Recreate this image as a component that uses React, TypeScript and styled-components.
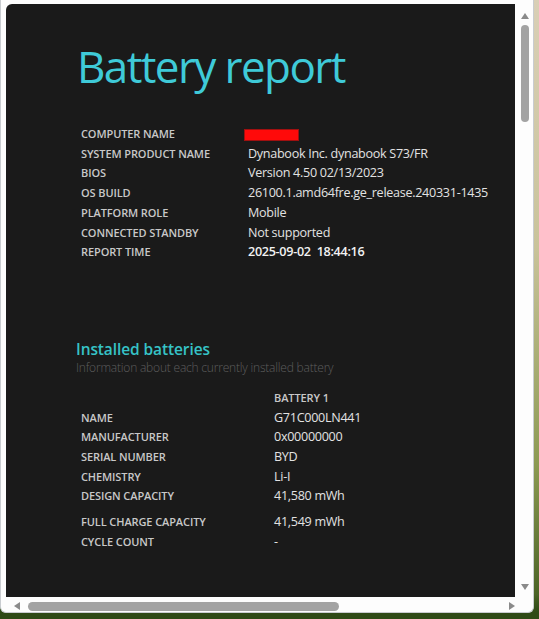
import React from "react";
import styled, { createGlobalStyle } from "styled-components";

const GlobalStyle = createGlobalStyle`
  html, body { margin: 0; padding: 0; }
  body {
    width: 539px;
    height: 619px;
    overflow: hidden;
    background: linear-gradient(180deg, #d9cfb6 0%, #c9c39a 40%, #8c9a52 75%, #3f5a1e 100%);
    font-family: "Open Sans", "Noto Sans", sans-serif;
  }
`;

const Desktop = styled.div`
  width: 539px;
  height: 619px;
  display: flex;
  align-items: flex-start;
  background: linear-gradient(180deg, rgba(0,0,0,0) 0%, rgba(0,0,0,0) 96%, #2f4a16 99%);
`;

const Window = styled.div`
  width: 534px;
  height: 613px;
  box-sizing: border-box;
  background: #fdfdfd;
  border: 1px solid #c9ccd0;
  border-top: none;
  border-radius: 0 0 6px 6px;
  padding: 4px 0 0 5px;
  display: grid;
  grid-template-columns: 509px 1fr;
  grid-template-rows: 593px 1fr;
`;

const Page = styled.div`
  background: #1a1a1a;
  border-radius: 6px 0 0 0;
  overflow: hidden;
  padding: 34px 0 0 70px;
  box-sizing: border-box;
  color: #e6e6e6;
`;

const Title = styled.h1`
  margin: 0 0 30px 1px;
  font-family: "Open Sans", sans-serif;
  font-weight: 400;
  font-size: 44px;
  line-height: 56px;
  letter-spacing: -1.6px;
  color: #3fcad8;
`;

const InfoTable = styled.div<{ $labelWidth: number }>`
  display: grid;
  grid-template-columns: ${(p) => p.$labelWidth}px 1fr;
  align-items: center;
  padding-left: 5px;
`;

const Label = styled.div<{ $gapTop?: number }>`
  font-size: 11px;
  line-height: 19.7px;
  font-weight: 600;
  color: #c8c8c8;
  text-transform: uppercase;
  white-space: nowrap;
  letter-spacing: -0.1px;
  margin-top: ${(p) => p.$gapTop ?? 0}px;
`;

const Value = styled.div<{ $bold?: boolean; $gapTop?: number }>`
  font-size: 12.6px;
  line-height: 19.7px;
  color: ${(p) => (p.$bold ? "#f2f2f2" : "#e2e2e2")};
  font-weight: ${(p) => (p.$bold ? 600 : 400)};
  white-space: nowrap;
  letter-spacing: -0.3px;
  margin-top: ${(p) => p.$gapTop ?? 0}px;
`;

const Redacted = styled.span`
  display: inline-block;
  width: 53px;
  height: 10px;
  background: #ff0a0a;
  border: 1px solid #a01010;
  margin-left: -4px;
  vertical-align: middle;
`;

const Section = styled.div`
  margin-top: 77px;
`;

const SectionTitle = styled.h2`
  margin: 0;
  font-size: 15.5px;
  font-weight: 600;
  line-height: 20px;
  color: #36c3c7;
  letter-spacing: -0.1px;
`;

const SectionSub = styled.div`
  margin-top: 1px;
  font-size: 12px;
  font-weight: 300;
  line-height: 16px;
  color: #5e5e5e;
  letter-spacing: -0.2px;
`;

const BatteryTable = styled(InfoTable)`
  margin-top: 12px;
`;

const VScroll = styled.div`
  display: flex;
  flex-direction: column;
  align-items: center;
  padding: 9px 0 7px 1px;
  box-sizing: border-box;
  height: 593px;
`;

const HScroll = styled.div`
  display: flex;
  align-items: center;
  padding: 3px 0 0 8px;
  box-sizing: border-box;
`;

const Arrow = styled.div<{ $dir: "up" | "down" | "left" | "right" }>`
  width: 0;
  height: 0;
  border-style: solid;
  border-color: transparent;
  ${(p) =>
    p.$dir === "up"
      ? "border-width: 0 4.5px 6px 4.5px; border-bottom-color: #8a8a8a;"
      : p.$dir === "down"
      ? "border-width: 6px 4.5px 0 4.5px; border-top-color: #8a8a8a;"
      : p.$dir === "left"
      ? "border-width: 4.5px 6px 4.5px 0; border-right-color: #8a8a8a;"
      : "border-width: 4.5px 0 4.5px 6px; border-left-color: #8a8a8a;"}
`;

const VThumb = styled.div`
  width: 8px;
  height: 97px;
  margin-top: 6px;
  border-radius: 4px;
  background: #a3a3a3;
`;

const HThumb = styled.div`
  width: 311px;
  height: 9px;
  margin-left: 8px;
  border-radius: 4.5px;
  background: #a3a3a3;
`;

const Spacer = styled.div`
  flex: 1;
`;

const systemRows: [string, React.ReactNode, boolean?][] = [
  ["Computer name", <Redacted />],
  ["System product name", "Dynabook Inc. dynabook S73/FR"],
  ["BIOS", "Version 4.50 02/13/2023"],
  ["OS build", "26100.1.amd64fre.ge_release.240331-1435"],
  ["Platform role", "Mobile"],
  ["Connected standby", "Not supported"],
  ["Report time", "2025-09-02\u00a0\u00a018:44:16", true],
];

const batteryRows: [string, string, number?][] = [
  ["Name", "G71C000LN441"],
  ["Manufacturer", "0x00000000"],
  ["Serial number", "BYD"],
  ["Chemistry", "Li-I"],
  ["Design capacity", "41,580 mWh"],
  ["Full charge capacity", "41,549 mWh", 6],
  ["Cycle count", "-"],
];

export default function App() {
  return (
    <>
      <GlobalStyle />
      <Desktop>
        <Window>
          <Page>
            <Title>Battery report</Title>
            <InfoTable $labelWidth={167}>
              {systemRows.map(([l, v, b]) => (
                <React.Fragment key={l}>
                  <Label>{l}</Label>
                  <Value $bold={b}>{v}</Value>
                </React.Fragment>
              ))}
            </InfoTable>
            <Section>
              <SectionTitle>Installed batteries</SectionTitle>
              <SectionSub>Information about each currently installed battery</SectionSub>
              <BatteryTable $labelWidth={193}>
                <span />
                <Label>Battery 1</Label>
                {batteryRows.map(([l, v, g]) => (
                  <React.Fragment key={l}>
                    <Label $gapTop={g}>{l}</Label>
                    <Value $gapTop={g}>{v}</Value>
                  </React.Fragment>
                ))}
              </BatteryTable>
            </Section>
          </Page>
          <VScroll>
            <Arrow $dir="up" />
            <VThumb />
            <Spacer />
            <Arrow $dir="down" />
          </VScroll>
          <HScroll>
            <Arrow $dir="left" />
            <HThumb />
            <Spacer />
            <Arrow $dir="right" />
          </HScroll>
        </Window>
      </Desktop>
    </>
  );
}
